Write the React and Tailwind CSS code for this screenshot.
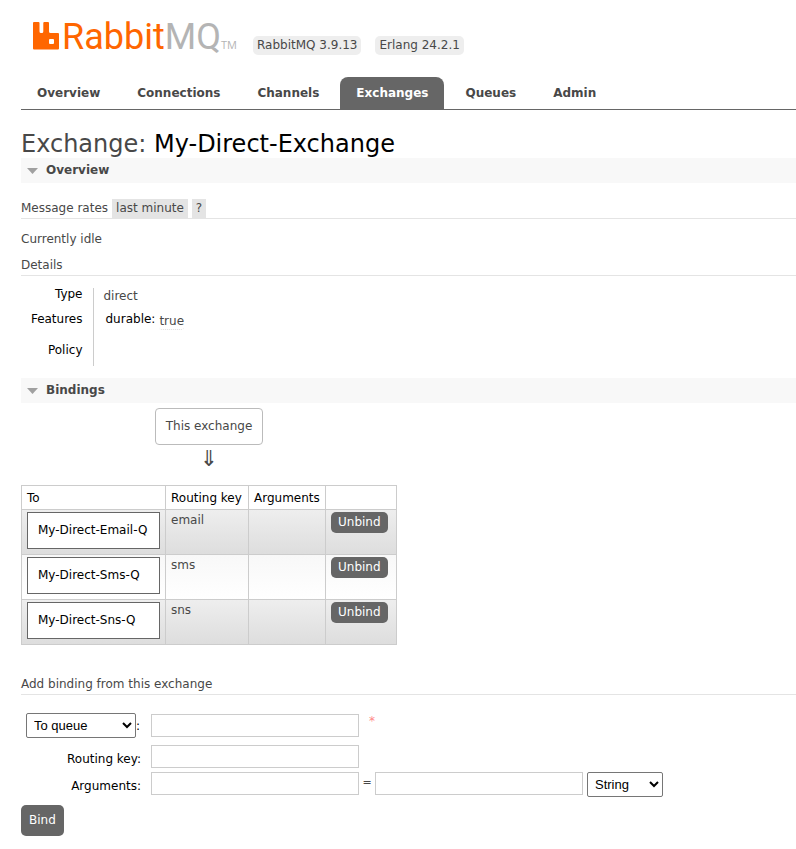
import React from "react";

const tabs = ["Overview", "Connections", "Channels", "Exchanges", "Queues", "Admin"];

const bindings = [
  { queue: "My-Direct-Email-Q", key: "email" },
  { queue: "My-Direct-Sms-Q", key: "sms" },
  { queue: "My-Direct-Sns-Q", key: "sns" },
];

const fieldClass = "h-[23px] w-[208px] border border-[#ccc] bg-white px-1";
const selectClass =
  "h-[25px] rounded-[2px] border border-[#767676] bg-white pl-[3px] font-['Liberation_Sans',sans-serif] text-[13px] text-black";

function Logo() {
  return (
    <a href="#/" aria-label="RabbitMQ" className="flex w-[218px] items-start pl-3">
      <svg className="mt-[22px] h-7 w-[27px]" viewBox="0 0 27 28" fill="#ff6600" aria-hidden="true">
        <path
          fillRule="evenodd"
          d="M1 0H5.500Q6.500 0 6.500 1V9.500Q6.500 11 8 11H9Q10.300 11 10.300 9.500V1Q10.300 0 11.300 0H15Q16 0 16 1V9.500Q16 11 17.500 11H25Q26 11 26 12V26.500Q26 27.500 25 27.500H1Q0 27.500 0 26.500V1Q0 0 1 0ZM17 17Q16 17 16 18V21Q16 22 17 22H20Q21 22 21 21V18Q21 17 20 17Z"
        />
      </svg>
      <span className="mt-4 w-[161px] pl-[2px] font-[Roboto,sans-serif] text-[36px] leading-[42px] text-[#ff6600]">
        Rabbit<span className="text-[#b4b4b4]">MQ</span>
      </span>
      <span className="mt-[37px] font-['Open_Sans',sans-serif] text-[11px] leading-4 text-[#b4b4b4]">TM</span>
    </a>
  );
}

function SectionTitle({ children }) {
  return (
    <h2 className="bg-[#f8f8f8] text-[12px] leading-[25px] font-bold">
      <button type="button" className="flex w-full items-center gap-2 pl-[6px] text-left">
        <svg className="h-[6px] w-[11px]" viewBox="0 0 11 6" fill="#a0a0a0" aria-hidden="true">
          <path d="M0 0H11L5.500 6Z" />
        </svg>
        {children}
      </button>
    </h2>
  );
}

export default function App() {
  return (
    <div className="bg-white pb-3 pl-[21px] font-['DejaVu_Sans',Verdana,sans-serif] text-[12px] leading-4 text-[#484848]">
      <header>
        <div className="flex h-[77px] items-start">
          <Logo />
          <div className="ml-[14px] flex gap-[14px] pt-9">
            <span className="rounded-[5px] bg-[#eee] px-1 leading-[19px]">RabbitMQ 3.9.13</span>
            <span className="rounded-[5px] bg-[#eee] px-1 leading-[19px]">Erlang 24.2.1</span>
          </div>
        </div>
        <nav className="flex gap-[5px] border-b border-[#666]">
          {tabs.map((tab) => (
            <a
              key={tab}
              href={"#/" + tab.toLowerCase()}
              className={
                tab === "Exchanges"
                  ? "rounded-t-lg bg-[#666] px-4 leading-8 font-bold text-white"
                  : "px-4 leading-8 font-bold"
              }
            >
              {tab}
            </a>
          ))}
        </nav>
      </header>

      <main>
        <h1 className="pt-5 text-[24px] leading-7">
          Exchange: <span className="text-black">My-Direct-Exchange</span>
        </h1>

        <SectionTitle>Overview</SectionTitle>
        <h3 className="mt-4 flex gap-1 border-b border-[#e4e4e4] leading-[19px]">
          Message rates
          <button type="button" className="bg-[#e4e4e4] px-1">last minute</button>
          <button type="button" className="bg-[#e4e4e4] px-1">?</button>
        </h3>
        <p className="mt-3">Currently idle</p>
        <h3 className="mt-2 border-b border-[#e4e4e4] leading-5">Details</h3>
        <table className="mt-3 text-left">
          <tbody>
            <tr className="h-[25px] align-top">
              <th className="w-[72px] border-r border-[#ccc] pr-[10px] text-right leading-3 font-normal text-black">Type</th>
              <td className="pl-[10px] leading-4">direct</td>
            </tr>
            <tr className="h-[31px] align-top">
              <th className="border-r border-[#ccc] pr-[10px] text-right leading-3 font-normal text-black">Features</th>
              <td className="pl-3">
                <div className="flex gap-1">
                  <span className="leading-3 text-black">durable:</span>
                  <span className="rounded-[3px] border-b border-dotted border-[#ddd] leading-4">true</span>
                </div>
              </td>
            </tr>
            <tr className="h-[22px] align-top">
              <th className="border-r border-[#ccc] pr-[10px] text-right leading-3 font-normal text-black">Policy</th>
              <td />
            </tr>
          </tbody>
        </table>

        <div className="mt-3">
          <SectionTitle>Bindings</SectionTitle>
        </div>
        <div className="flex w-[376px] flex-col items-center pt-[5px]">
          <span className="rounded-[4px] border border-[#bbb] px-[10px] leading-[35px]">This exchange</span>
          <span className="text-[22px] leading-7">⇓</span>
        </div>

        <table className="mt-3 border-collapse text-left">
          <thead>
            <tr className="h-6 text-black">
              <th className="w-[144px] border border-[#ccc] px-[5px] font-normal">To</th>
              <th className="w-[83px] border border-[#ccc] px-[5px] font-normal">Routing key</th>
              <th className="w-[77px] border border-[#ccc] px-[5px] font-normal">Arguments</th>
              <th className="w-[71px] border border-[#ccc]" />
            </tr>
          </thead>
          <tbody>
            {bindings.map((row, i) => (
              <tr
                key={row.key}
                className={
                  i % 2 === 0
                    ? "h-[45px] bg-linear-to-b from-[#eee] to-[#ddd] align-top"
                    : "h-[45px] bg-linear-to-b from-[#f8f8f8] to-white align-top"
                }
              >
                <td className="border border-[#ccc] px-[5px] pt-[2px]">
                  <a href="#/queues" className="block border border-[#666] bg-white pl-[10px] leading-[35px] text-black">
                    {row.queue}
                  </a>
                </td>
                <td className="border border-[#ccc] px-[5px] pt-[2px]">{row.key}</td>
                <td className="border border-[#ccc]" />
                <td className="border border-[#ccc] px-[5px] pt-[2px]">
                  <button type="button" className="block rounded-[5px] bg-[#666] px-[7px] leading-[21px] text-white">
                    Unbind
                  </button>
                </td>
              </tr>
            ))}
          </tbody>
        </table>

        <h3 className="mt-[30px] border-b border-[#e4e4e4] leading-[19px]">Add binding from this exchange</h3>
        <form className="pt-[18px]" onSubmit={(e) => e.preventDefault()}>
          <div className="flex items-center">
            <div className="flex w-[120px] items-center justify-end text-black">
              <select aria-label="Destination type" className={selectClass + " w-[110px]"}>
                <option>To queue</option>
                <option>To exchange</option>
              </select>
              <span className="w-[5px]">:</span>
            </div>
            <input aria-label="Destination" className={fieldClass + " ml-[10px]"} />
            <span className="ml-[10px] self-start text-[#f88]">*</span>
          </div>
          <div className="mt-[7px] flex items-start">
            <label htmlFor="routing-key" className="w-[120px] pt-[6px] text-right text-black">Routing key:</label>
            <input id="routing-key" className={fieldClass + " ml-[10px]"} />
          </div>
          <div className="mt-1 flex items-start">
            <label htmlFor="arg-name" className="w-[120px] pt-[6px] text-right text-black">Arguments:</label>
            <input id="arg-name" className={fieldClass + " ml-[10px]"} />
            <span className="w-4 text-center text-[11px] leading-[21px]">=</span>
            <input aria-label="Argument value" className={fieldClass} />
            <select aria-label="Argument type" className={selectClass + " ml-1 w-[76px]"}>
              <option>String</option>
              <option>Number</option>
              <option>Boolean</option>
              <option>List</option>
            </select>
          </div>
          <button type="submit" className="mt-2 rounded-[5px] bg-[#666] px-2 leading-[31px] text-white">Bind</button>
        </form>
      </main>
    </div>
  );
}
